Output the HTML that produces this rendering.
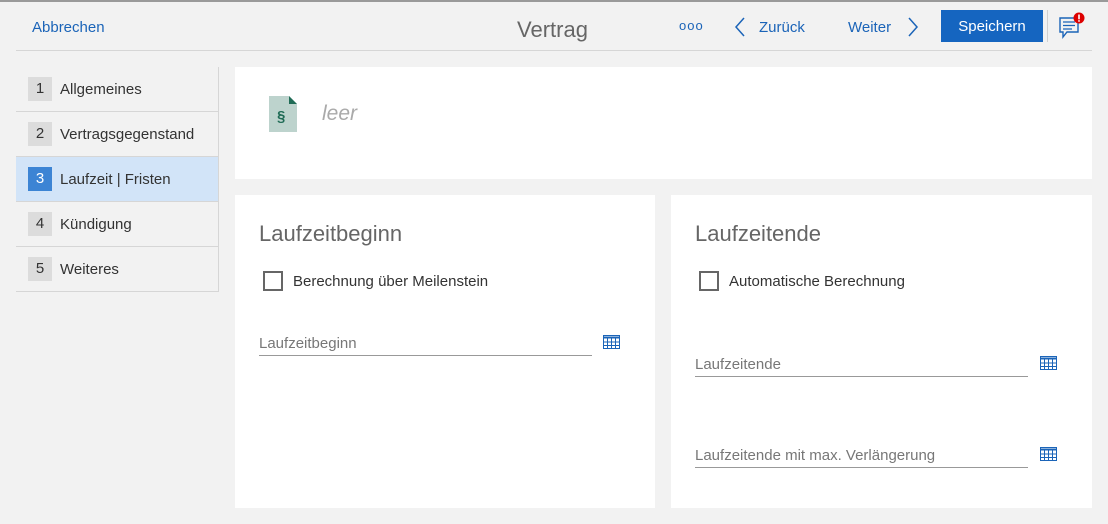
<!DOCTYPE html><html><head><style>
body{margin:0;width:1108px;height:524px;background:#f2f2f2;font-family:"Segoe UI","Liberation Sans",sans-serif;position:relative;overflow:hidden;color:#333}
div,span{position:absolute;box-sizing:border-box}
.blue{color:#1b64b8}
.item{left:16px;width:202px;height:45px;border-bottom:1px solid #d6d6d6;font-size:15px;color:#333}
.item .n{left:12px;top:10px;width:24px;height:24px;background:#dcdcdc;text-align:center;line-height:24px;font-size:15px}
.item .t{left:44px;top:14px;white-space:nowrap}
.card{background:#fff}
.h{font-size:22px;color:#666;font-weight:300}
.cb{width:20px;height:20px;border:2px solid #666}
.lbl{font-size:15px;color:#333;white-space:nowrap}
.fld{font-size:15px;color:#777;white-space:nowrap;border-bottom:1px solid #999;height:24px;padding-top:3px}
</style></head><body>
<div style="left:0;top:0;width:1108px;height:2px;background:#9a9a9a"></div>
<div class="blue" style="left:32px;top:19px;font-size:15px">Abbrechen</div>
<div style="left:517px;top:17px;font-size:22px;color:#666;font-weight:300">Vertrag</div>
<div class="blue" style="left:679px;top:18px;font-size:13px;letter-spacing:1px">ooo</div>
<svg style="position:absolute;left:734px;top:17px" width="12" height="20"><path d="M10 1 L2 10 L10 19" stroke="#1b64b8" stroke-width="1.5" fill="none"/></svg>
<div class="blue" style="left:759px;top:19px;font-size:15px">Zurück</div>
<div class="blue" style="left:848px;top:19px;font-size:15px">Weiter</div>
<svg style="position:absolute;left:907px;top:17px" width="12" height="20"><path d="M2 1 L10 10 L2 19" stroke="#1b64b8" stroke-width="1.5" fill="none"/></svg>
<div style="left:941px;top:10px;width:102px;height:32px;background:#1565c0;color:#fff;font-size:15px;text-align:center;line-height:34px">Speichern</div>
<div style="left:1047px;top:10px;width:1px;height:32px;background:#d0d0d0"></div>
<svg style="position:absolute;left:1058px;top:12px" width="28" height="28"><path d="M2 6 H20 V20 H9 L5 25 V20 H2 Z" fill="none" stroke="#1b64b8" stroke-width="1.4"/><path d="M5 10H17M5 13.5H17M5 17H14" stroke="#1b64b8" stroke-width="1.2"/><circle cx="21" cy="6" r="5.5" fill="#d00"/><rect x="20.2" y="2.5" width="1.6" height="4.8" fill="#fff"/><rect x="20.2" y="8.2" width="1.6" height="1.5" fill="#fff"/></svg>
<div style="left:16px;top:50px;width:1076px;height:1px;background:#d6d6d6"></div>
<div style="left:218px;top:67px;width:1px;height:225px;background:#d6d6d6"></div>
<div class="item" style="top:67px"><span class="n">1</span><span class="t">Allgemeines</span></div>
<div class="item" style="top:112px"><span class="n">2</span><span class="t">Vertragsgegenstand</span></div>
<div class="item" style="top:157px;background:#d2e4f8"><span class="n" style="background:#3c84d4;color:#fff">3</span><span class="t">Laufzeit | Fristen</span></div>
<div class="item" style="top:202px"><span class="n">4</span><span class="t">Kündigung</span></div>
<div class="item" style="top:247px"><span class="n">5</span><span class="t">Weiteres</span></div>
<div class="card" style="left:235px;top:67px;width:857px;height:112px">
<svg style="position:absolute;left:34px;top:29px" width="28" height="38"><path d="M0 0 H20 L28 8 V36 H0 Z" fill="#bdd3cd"/><path d="M20 0 L28 8 H20 Z" fill="#1f6b55"/><text x="8" y="25" font-size="15" font-weight="bold" fill="#1f6b55" font-family="Liberation Sans">§</text></svg>
<span style="left:87px;top:35px;font-size:21px;color:#aaa;font-style:italic;font-weight:300">leer</span></div>
<div class="card" style="left:235px;top:195px;width:420px;height:313px">
<span class="h" style="left:24px;top:26px">Laufzeitbeginn</span>
<span class="cb" style="left:28px;top:76px"></span><span class="lbl" style="left:58px;top:78px">Berechnung über Meilenstein</span>
<span class="fld" style="left:24px;top:137px;width:333px">Laufzeitbeginn</span>
</div>
<div class="card" style="left:671px;top:195px;width:421px;height:313px">
<span class="h" style="left:24px;top:26px">Laufzeitende</span>
<span class="cb" style="left:28px;top:76px"></span><span class="lbl" style="left:58px;top:78px">Automatische Berechnung</span>
<span class="fld" style="left:24px;top:158px;width:333px">Laufzeitende</span>
<span class="fld" style="left:24px;top:249px;width:333px">Laufzeitende mit max. Verlängerung</span>
</div>
<svg style="position:absolute;left:603px;top:335px" width="17" height="14"><g fill="none" stroke="#1b64b8"><rect x=".5" y=".5" width="16" height="13"/><path d="M.5 2.5H16.5" stroke-width="2"/><path d="M.5 7H16.5M.5 10.5H16.5M4.5 3V13M8.5 3V13M12.5 3V13"/></g></svg>
<svg style="position:absolute;left:1040px;top:356px" width="17" height="14"><g fill="none" stroke="#1b64b8"><rect x=".5" y=".5" width="16" height="13"/><path d="M.5 2.5H16.5" stroke-width="2"/><path d="M.5 7H16.5M.5 10.5H16.5M4.5 3V13M8.5 3V13M12.5 3V13"/></g></svg>
<svg style="position:absolute;left:1040px;top:447px" width="17" height="14"><g fill="none" stroke="#1b64b8"><rect x=".5" y=".5" width="16" height="13"/><path d="M.5 2.5H16.5" stroke-width="2"/><path d="M.5 7H16.5M.5 10.5H16.5M4.5 3V13M8.5 3V13M12.5 3V13"/></g></svg>
</body></html>
